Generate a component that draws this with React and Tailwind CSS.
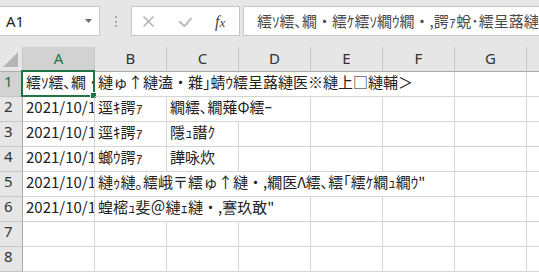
import React from 'react';

// widths for cells that span (text overflowing into the empty neighbours)
const W = { 1: 'w-[72px]', 2: 'w-[144px]', 3: 'w-[216px]', 5: 'w-[360px]' };
const COLS = ['A', 'B', 'C', 'D', 'E', 'F', 'G'];

const DATE = '2021/10/1';
const rows = [
  { n: 1, sel: true, cells: [[1, '繧ｿ繧､繝・繧ｹ繧ｿ繝ｳ繝・,諤ｧ蛻･繧呈蕗縺医※縺上□縺輔＞'], [5, '縺ゅ↑縺溘・雜｣蜻ｳ繧呈蕗縺医※縺上□縺輔＞'], [1, '']] },
  { n: 2, cells: [[1, DATE], [1, '逕ｷ諤ｧ'], [2, '繝繧､繝薙Φ繧ｰ'], [1, ''], [1, ''], [1, '']] },
  { n: 3, cells: [[1, DATE], [1, '逕ｷ諤ｧ'], [1, '隱ｭ譖ｸ'], [1, ''], [1, ''], [1, ''], [1, '']] },
  { n: 4, cells: [[1, DATE], [1, '螂ｳ諤ｧ'], [1, '譁咏炊'], [1, ''], [1, ''], [1, ''], [1, '']] },
  { n: 5, cells: [[1, DATE], [5, '縺ｩ縺｡繧峨〒繧ゅ↑縺・,繝医Λ繧､繧｢繧ｹ繝ｭ繝ｳ"'], [1, '']] },
  { n: 6, cells: [[1, DATE], [3, '蝗樒ｭ斐＠縺ｪ縺・,謇玖敢"'], [1, ''], [1, ''], [1, '']] },
  { n: 7, cells: [[1, ''], [1, ''], [1, ''], [1, ''], [1, ''], [1, ''], [1, '']] },
  { n: 8, cells: [[1, ''], [1, ''], [1, ''], [1, ''], [1, ''], [1, ''], [1, '']] },
];

function FormulaBar() {
  return (
    <div className="flex h-[47px] items-start bg-[#e6e6e6] pt-[6px]">
      <div className="flex h-[30px] w-[100px] shrink-0 items-center justify-between border border-l-0 border-[#c6c6c6] bg-white pl-[6px] pr-[7px] font-['Noto_Sans',sans-serif] text-[#262626]">
        <span>A1</span>
        <svg width="7" height="4" viewBox="0 0 7 4">
          <path d="M0 0h7L3.5 4z" fill="#6d6d6d" />
        </svg>
      </div>
      <div className="flex w-[31px] shrink-0 flex-col items-center gap-[2.5px] pt-[10px]">
        <div className="h-[2px] w-[2px] bg-[#a8a8a8]" />
        <div className="h-[2px] w-[2px] bg-[#a8a8a8]" />
        <div className="h-[2px] w-[2px] bg-[#a8a8a8]" />
      </div>
      <div className="flex h-[30px] w-[109px] shrink-0 items-center border border-[#c6c6c6] bg-white pt-[1px]">
        <svg className="ml-[11px]" width="11" height="11" viewBox="0 0 11 11">
          <path d="M0.5 0.5l10 10M10.5 0.5l-10 10" stroke="#ababab" strokeWidth="1.3" />
        </svg>
        <svg className="ml-[24px]" width="14" height="10" viewBox="0 0 14 10">
          <path d="M1 4.2l5.5 5L13.5 1" stroke="#c0c0c0" strokeWidth="2.2" fill="none" />
        </svg>
        <span className="ml-[23px] font-['Liberation_Serif',serif] text-[16px] italic leading-none text-[#444]">
          f<span className="text-[13px]">x</span>
        </span>
      </div>
      <div className="ml-[3px] flex h-[30px] min-w-0 flex-1 items-center overflow-hidden whitespace-nowrap border border-r-0 border-[#c6c6c6] bg-white pl-[13px] text-[#4a4a4a]">
        繧ｿ繧､繝・繧ｹ繧ｿ繝ｳ繝・,諤ｧ蛻･繧呈蕗縺医※縺上□縺輔＞
      </div>
    </div>
  );
}

function ColumnHeads() {
  return (
    <div className="flex h-[25px] bg-[#e6e6e6] font-['Noto_Sans',sans-serif] text-[#333]">
      <div className="flex w-[23px] shrink-0 items-end border-r border-b border-r-[#c6c6c6] border-b-[#ababab]">
        <svg width="22" height="24" viewBox="0 0 22 24">
          <path d="M3 20h15V5z" fill="#b6b6b6" />
        </svg>
      </div>
      {COLS.map((c) => (
        <div
          key={c}
          className={
            c === 'A'
              ? 'flex w-[72px] shrink-0 items-center justify-center border-r border-b-2 border-r-[#c6c6c6] border-b-[#217346] bg-[#d2d2d2] pb-[1px] text-[#217346]'
              : 'flex w-[72px] shrink-0 items-center justify-center border-r border-b border-r-[#c6c6c6] border-b-[#ababab] pb-[2px]'
          }
        >
          {c}
        </div>
      ))}
      <div className="min-w-0 flex-1 border-b border-b-[#ababab]" />
    </div>
  );
}

function Row({ n, sel, cells }) {
  return (
    <div className="flex h-[25px]">
      <div
        className={
          sel
            ? "w-[23px] shrink-0 border-r border-b border-r-[#ababab] border-b-[#c6c6c6] bg-[#d2d2d2] pl-[4px] font-['Noto_Sans',sans-serif] leading-[19px] text-[#217346]"
            : "w-[23px] shrink-0 border-r border-b border-r-[#ababab] border-b-[#c6c6c6] bg-[#e6e6e6] pl-[4px] font-['Noto_Sans',sans-serif] leading-[19px] text-[#333]"
        }
      >
        {n}
      </div>
      {cells.map(([span, text], i) => (
        <div
          key={i}
          className={`${W[span]} relative shrink-0 whitespace-nowrap border-r border-b border-[#d4d4d4] leading-[19px] text-[#222]`}
        >
          <div className="overflow-hidden pl-[3px]">{text}</div>
          {sel && i === 0 && (
            <>
              <div className="absolute left-[-2px] top-[-2px] h-[27px] w-[74px] border-2 border-[#217346]" />
              <div className="absolute left-[67px] top-[20px] h-[7px] w-[7px] border border-white bg-[#217346]" />
            </>
          )}
        </div>
      ))}
      <div className="min-w-0 flex-1 border-b border-[#d4d4d4]" />
    </div>
  );
}

export default function App() {
  return (
    <div className="h-[272px] w-[539px] overflow-hidden bg-white font-['Noto_Sans_CJK_JP',sans-serif] text-[15px]">
      <FormulaBar />
      <ColumnHeads />
      {rows.map((r) => (
        <Row key={r.n} {...r} />
      ))}
    </div>
  );
}
